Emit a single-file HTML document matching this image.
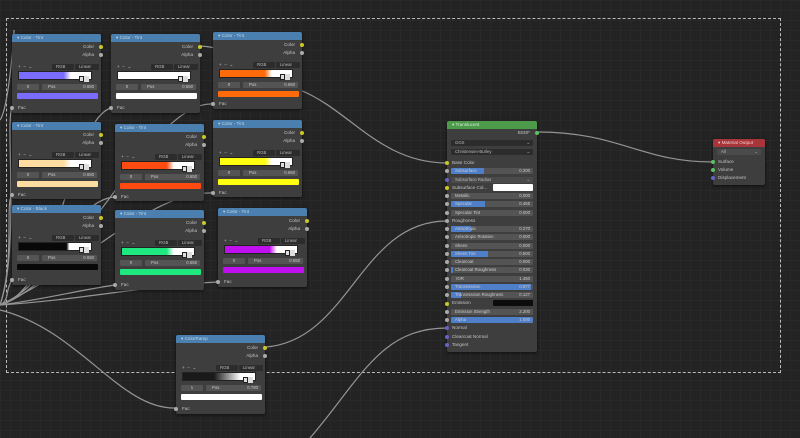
<!DOCTYPE html>
<html><head><meta charset="utf-8"><style>
*{margin:0;padding:0;box-sizing:border-box}
body{width:800px;height:438px;overflow:hidden;position:relative;font-family:"Liberation Sans",sans-serif;
background-color:#232323;
background-image:linear-gradient(#292929 1px,transparent 1px),linear-gradient(90deg,#292929 1px,transparent 1px);
background-size:10px 10px;}
.sel{position:absolute;left:6px;top:18px;width:775px;height:355px;border:1px dashed #bbb}
svg{position:absolute;left:0;top:0}
.n{position:absolute;width:89px;height:79px;background:#3e3e3e;border-radius:2px;box-shadow:0 1px 3px rgba(0,0,0,.6);font-size:4.6px;color:#c4c4c4}
.h{height:8px;background:#4a7faf;color:#c4d8e8;line-height:8px;padding-left:5px;border-radius:2px 2px 0 0;white-space:nowrap;overflow:hidden}
.a{position:absolute;white-space:nowrap;line-height:6px}
.so{position:absolute;width:4px;height:4px;border-radius:50%;background:#aaa}
.y{background:#c8c829}.p{background:#6363c7}
.dd{position:absolute;height:6px;background:#2c2c2c;border-radius:1px;line-height:6px;font-size:4.3px;color:#bbb;padding-left:4px}
.bx{position:absolute;height:6px;background:#545454;border-radius:1px;line-height:6px;font-size:4.3px;color:#ccc}
.bar{position:absolute;left:6px;top:37px;width:74px;height:9px;border:1px solid #222}
.bar:after{content:"";position:absolute;left:60px;top:4px;width:3px;height:4px;border:1px solid #222;background:#ddd;box-shadow:5px 0 0 #ddd}
.sw{position:absolute;left:5px;top:59px;width:81px;height:6px;border-radius:1px}
.f{position:absolute;left:4px;width:82px;height:6px;background:#545454;border-radius:1px;line-height:6px;font-size:4.3px;color:#ccc;overflow:hidden}
.f b{position:absolute;left:0;top:0;height:6px;background:#4f7fc9}
.f span{position:relative;padding-left:4px}
.f em{position:absolute;right:3px;font-style:normal}
</style></head><body>
<div class="sel"></div>
<svg width="800" height="438" fill="none" stroke="#959595" stroke-width="1.2">
<path d="M0 305 C 20 250, 5 120, 12 108"/>
<path d="M0 305 C 60 290, 70 120, 111 108"/>
<path d="M0 305 C 80 280, 150 100, 213 104"/>
<path d="M0 305 C 15 260, 5 200, 12 195"/>
<path d="M0 305 C 60 280, 70 200, 115 197"/>
<path d="M0 305 C 80 270, 150 190, 213 193"/>
<path d="M0 305 C 10 300, 5 290, 12 280"/>
<path d="M0 305 C 40 300, 80 290, 115 285"/>
<path d="M0 305 C 80 300, 150 285, 218 282"/>
<path d="M0 310 C 80 330, 120 410, 176 408"/>
<path d="M200 46 C 260 50, 280 90, 300 90 C 350 110, 380 163, 447 163"/>
<path d="M266 347 C 350 340, 360 221, 447 221"/>
<path d="M310 438 C 360 380, 380 328, 447 328"/>
<path d="M537 132 C 620 132, 640 162, 713 162"/>
<path d="M0 120 C 8 110, 14 40, 14 30"/>
</svg>

<div class="n" style="left:12px;top:34px"><div class="h">▾ Color - Tint</div>
<span class="a" style="right:7px;top:10px">Color</span><i class="so y" style="right:-2px;top:11px"></i>
<span class="a" style="right:7px;top:18px">Alpha</span><i class="so" style="right:-2px;top:19px"></i>
<span class="a" style="left:6px;top:30px">+&nbsp; −&nbsp; ⌄</span>
<div class="dd" style="left:40px;top:30px;width:22px">RGB</div><div class="dd" style="left:63px;top:30px;width:24px">Linear</div>
<div class="bar" style="background:linear-gradient(90deg,#7a6cff 0 62%,#fff 72%)"></div>
<div class="bx" style="left:5px;top:50px;width:22px;text-align:center">0</div><div class="bx" style="left:30px;top:50px;width:55px;padding-left:6px">Pos<span style="position:absolute;right:3px">0.650</span></div>
<div class="sw" style="background:#7a6cff"></div>
<span class="a" style="left:6px;top:71px">Fac</span><i class="so" style="left:-2px;top:72px"></i></div>

<div class="n" style="left:111px;top:34px"><div class="h">▾ Color - Tint</div>
<span class="a" style="right:7px;top:10px">Color</span><i class="so y" style="right:-2px;top:11px"></i>
<span class="a" style="right:7px;top:18px">Alpha</span><i class="so" style="right:-2px;top:19px"></i>
<span class="a" style="left:6px;top:30px">+&nbsp; −&nbsp; ⌄</span>
<div class="dd" style="left:40px;top:30px;width:22px">RGB</div><div class="dd" style="left:63px;top:30px;width:24px">Linear</div>
<div class="bar" style="background:#fff"></div>
<div class="bx" style="left:5px;top:50px;width:22px;text-align:center">0</div><div class="bx" style="left:30px;top:50px;width:55px;padding-left:6px">Pos<span style="position:absolute;right:3px">0.650</span></div>
<div class="sw" style="background:#fff"></div>
<span class="a" style="left:6px;top:71px">Fac</span><i class="so" style="left:-2px;top:72px"></i></div>

<div class="n" style="left:213px;top:32px;height:77px"><div class="h">▾ Color - Tint</div>
<span class="a" style="right:7px;top:10px">Color</span><i class="so y" style="right:-2px;top:11px"></i>
<span class="a" style="right:7px;top:18px">Alpha</span><i class="so" style="right:-2px;top:19px"></i>
<span class="a" style="left:6px;top:30px">+&nbsp; −&nbsp; ⌄</span>
<div class="dd" style="left:40px;top:30px;width:22px">RGB</div><div class="dd" style="left:63px;top:30px;width:24px">Linear</div>
<div class="bar" style="background:linear-gradient(90deg,#ff6a0a 0 62%,#fff 72%)"></div>
<div class="bx" style="left:5px;top:50px;width:22px;text-align:center">0</div><div class="bx" style="left:30px;top:50px;width:55px;padding-left:6px">Pos<span style="position:absolute;right:3px">0.650</span></div>
<div class="sw" style="background:#ff6a0a"></div>
<span class="a" style="left:6px;top:69px">Fac</span><i class="so" style="left:-2px;top:70px"></i></div>

<div class="n" style="left:12px;top:122px;height:77px"><div class="h">▾ Color - Tint</div>
<span class="a" style="right:7px;top:10px">Color</span><i class="so y" style="right:-2px;top:11px"></i>
<span class="a" style="right:7px;top:18px">Alpha</span><i class="so" style="right:-2px;top:19px"></i>
<span class="a" style="left:6px;top:30px">+&nbsp; −&nbsp; ⌄</span>
<div class="dd" style="left:40px;top:30px;width:22px">RGB</div><div class="dd" style="left:63px;top:30px;width:24px">Linear</div>
<div class="bar" style="background:linear-gradient(90deg,#ffdca0 0 62%,#fff 72%)"></div>
<div class="bx" style="left:5px;top:50px;width:22px;text-align:center">0</div><div class="bx" style="left:30px;top:50px;width:55px;padding-left:6px">Pos<span style="position:absolute;right:3px">0.650</span></div>
<div class="sw" style="background:#ffdca0"></div>
<span class="a" style="left:6px;top:70px">Fac</span><i class="so" style="left:-2px;top:71px"></i></div>

<div class="n" style="left:115px;top:124px;height:77px"><div class="h">▾ Color - Tint</div>
<span class="a" style="right:7px;top:10px">Color</span><i class="so y" style="right:-2px;top:11px"></i>
<span class="a" style="right:7px;top:18px">Alpha</span><i class="so" style="right:-2px;top:19px"></i>
<span class="a" style="left:6px;top:30px">+&nbsp; −&nbsp; ⌄</span>
<div class="dd" style="left:40px;top:30px;width:22px">RGB</div><div class="dd" style="left:63px;top:30px;width:24px">Linear</div>
<div class="bar" style="background:linear-gradient(90deg,#ff4a10 0 62%,#fff 72%)"></div>
<div class="bx" style="left:5px;top:50px;width:22px;text-align:center">0</div><div class="bx" style="left:30px;top:50px;width:55px;padding-left:6px">Pos<span style="position:absolute;right:3px">0.650</span></div>
<div class="sw" style="background:#ff4a10"></div>
<span class="a" style="left:6px;top:70px">Fac</span><i class="so" style="left:-2px;top:71px"></i></div>

<div class="n" style="left:213px;top:120px;height:77px"><div class="h">▾ Color - Tint</div>
<span class="a" style="right:7px;top:10px">Color</span><i class="so y" style="right:-2px;top:11px"></i>
<span class="a" style="right:7px;top:18px">Alpha</span><i class="so" style="right:-2px;top:19px"></i>
<span class="a" style="left:6px;top:30px">+&nbsp; −&nbsp; ⌄</span>
<div class="dd" style="left:40px;top:30px;width:22px">RGB</div><div class="dd" style="left:63px;top:30px;width:24px">Linear</div>
<div class="bar" style="background:linear-gradient(90deg,#ffff10 0 62%,#fff 72%)"></div>
<div class="bx" style="left:5px;top:50px;width:22px;text-align:center">0</div><div class="bx" style="left:30px;top:50px;width:55px;padding-left:6px">Pos<span style="position:absolute;right:3px">0.650</span></div>
<div class="sw" style="background:#ffff10"></div>
<span class="a" style="left:6px;top:70px">Fac</span><i class="so" style="left:-2px;top:71px"></i></div>

<div class="n" style="left:12px;top:205px;height:80px"><div class="h">▾ Color - Black</div>
<span class="a" style="right:7px;top:10px">Color</span><i class="so y" style="right:-2px;top:11px"></i>
<span class="a" style="right:7px;top:18px">Alpha</span><i class="so" style="right:-2px;top:19px"></i>
<span class="a" style="left:6px;top:30px">+&nbsp; −&nbsp; ⌄</span>
<div class="dd" style="left:40px;top:30px;width:22px">RGB</div><div class="dd" style="left:63px;top:30px;width:24px">Linear</div>
<div class="bar" style="background:linear-gradient(90deg,#080808 0 66%,#fff 70%)"></div>
<div class="bx" style="left:5px;top:50px;width:22px;text-align:center">0</div><div class="bx" style="left:30px;top:50px;width:55px;padding-left:6px">Pos<span style="position:absolute;right:3px">0.650</span></div>
<div class="sw" style="background:#080808"></div>
<span class="a" style="left:6px;top:72px">Fac</span><i class="so" style="left:-2px;top:73px"></i></div>

<div class="n" style="left:115px;top:210px;height:80px"><div class="h">▾ Color - Tint</div>
<span class="a" style="right:7px;top:10px">Color</span><i class="so y" style="right:-2px;top:11px"></i>
<span class="a" style="right:7px;top:18px">Alpha</span><i class="so" style="right:-2px;top:19px"></i>
<span class="a" style="left:6px;top:30px">+&nbsp; −&nbsp; ⌄</span>
<div class="dd" style="left:40px;top:30px;width:22px">RGB</div><div class="dd" style="left:63px;top:30px;width:24px">Linear</div>
<div class="bar" style="background:linear-gradient(90deg,#20e880 0 62%,#fff 72%)"></div>
<div class="bx" style="left:5px;top:50px;width:22px;text-align:center">0</div><div class="bx" style="left:30px;top:50px;width:55px;padding-left:6px">Pos<span style="position:absolute;right:3px">0.650</span></div>
<div class="sw" style="background:#20e880"></div>
<span class="a" style="left:6px;top:72px">Fac</span><i class="so" style="left:-2px;top:73px"></i></div>

<div class="n" style="left:218px;top:208px;height:79px"><div class="h">▾ Color - Tint</div>
<span class="a" style="right:7px;top:10px">Color</span><i class="so y" style="right:-2px;top:11px"></i>
<span class="a" style="right:7px;top:18px">Alpha</span><i class="so" style="right:-2px;top:19px"></i>
<span class="a" style="left:6px;top:30px">+&nbsp; −&nbsp; ⌄</span>
<div class="dd" style="left:40px;top:30px;width:22px">RGB</div><div class="dd" style="left:63px;top:30px;width:24px">Linear</div>
<div class="bar" style="background:linear-gradient(90deg,#c010f0 0 62%,#fff 72%)"></div>
<div class="bx" style="left:5px;top:50px;width:22px;text-align:center">0</div><div class="bx" style="left:30px;top:50px;width:55px;padding-left:6px">Pos<span style="position:absolute;right:3px">0.650</span></div>
<div class="sw" style="background:#c010f0"></div>
<span class="a" style="left:6px;top:71px">Fac</span><i class="so" style="left:-2px;top:72px"></i></div>

<div class="n" style="left:176px;top:335px;height:79px"><div class="h">▾ ColorRamp</div>
<span class="a" style="right:7px;top:10px">Color</span><i class="so y" style="right:-2px;top:11px"></i>
<span class="a" style="right:7px;top:18px">Alpha</span><i class="so" style="right:-2px;top:19px"></i>
<span class="a" style="left:6px;top:30px">+&nbsp; −&nbsp; ⌄</span>
<div class="dd" style="left:40px;top:30px;width:22px">RGB</div><div class="dd" style="left:63px;top:30px;width:24px">Linear</div>
<div class="bar" style="background:linear-gradient(90deg,#1a1a1a 0 43%,#fff 80%)"></div>
<div class="bx" style="left:5px;top:50px;width:22px;text-align:center">1</div><div class="bx" style="left:30px;top:50px;width:55px;padding-left:6px">Pos<span style="position:absolute;right:3px">0.780</span></div>
<div class="sw" style="background:#fff"></div>
<span class="a" style="left:6px;top:71px">Fac</span><i class="so" style="left:-2px;top:72px"></i></div>

<div class="n" style="left:447px;top:121px;width:90px;height:231px"><div class="h" style="background:#4d9a4a;color:#d4ecd4">▾ Translucent</div>
<span class="a" style="right:7px;top:9px">BSDF</span><i class="so" style="right:-2px;top:10px;background:#5fc05f"></i>
<div class="dd" style="left:4px;top:19px;width:82px">GGX<span style="position:absolute;right:3px">⌄</span></div>
<div class="dd" style="left:4px;top:28px;width:82px">Christensen-Burley<span style="position:absolute;right:3px">⌄</span></div>
<span class="a" style="left:5px;top:39px">Base Color</span><i class="so y" style="left:-2px;top:40px"></i>
<div class="f" style="top:47px"><b style="width:40%"></b><span>Subsurface</span><em>0.200</em></div><i class="so" style="left:-2px;top:48px"></i>
<div class="dd" style="left:4px;top:56px;width:82px;background:#4a4a4a">Subsurface Radius<span style="position:absolute;right:3px">⌄</span></div><i class="so p" style="left:-2px;top:57px"></i>
<span class="a" style="left:5px;top:64px">Subsurface Col...</span><div style="position:absolute;left:46px;top:63px;width:40px;height:7px;background:#fff;border-radius:1px"></div><i class="so y" style="left:-2px;top:65px"></i>
<div class="f" style="top:72px"><span>Metallic</span><em>0.000</em></div><i class="so" style="left:-2px;top:73px"></i>
<div class="f" style="top:80px"><b style="width:42%"></b><span>Specular</span><em>0.465</em></div><i class="so" style="left:-2px;top:81px"></i>
<div class="f" style="top:89px"><span>Specular Tint</span><em>0.000</em></div><i class="so" style="left:-2px;top:90px"></i>
<span class="a" style="left:5px;top:97px">Roughness</span><i class="so" style="left:-2px;top:98px"></i>
<div class="f" style="top:105px"><b style="width:24%"></b><span>Anisotropic</span><em>0.270</em></div><i class="so" style="left:-2px;top:106px"></i>
<div class="f" style="top:113px"><span>Anisotropic Rotation</span><em>0.000</em></div><i class="so" style="left:-2px;top:114px"></i>
<div class="f" style="top:122px"><span>Sheen</span><em>0.000</em></div><i class="so" style="left:-2px;top:123px"></i>
<div class="f" style="top:130px"><b style="width:45%"></b><span>Sheen Tint</span><em>0.500</em></div><i class="so" style="left:-2px;top:131px"></i>
<div class="f" style="top:138px"><span>Clearcoat</span><em>0.000</em></div><i class="so" style="left:-2px;top:139px"></i>
<div class="f" style="top:146px"><b style="width:3%"></b><span>Clearcoat Roughness</span><em>0.030</em></div><i class="so" style="left:-2px;top:147px"></i>
<div class="f" style="top:155px"><span>&nbsp;IOR</span><em>1.450</em></div><i class="so" style="left:-2px;top:156px"></i>
<div class="f" style="top:163px"><b style="width:97%"></b><span>Transmission</span><em>0.977</em></div><i class="so" style="left:-2px;top:164px"></i>
<div class="f" style="top:171px"><b style="width:12%"></b><span>Transmission Roughness</span><em>0.127</em></div><i class="so" style="left:-2px;top:172px"></i>
<span class="a" style="left:5px;top:179px">Emission</span><div style="position:absolute;left:46px;top:179px;width:40px;height:6px;background:#0c0c0c;border-radius:1px"></div><i class="so y" style="left:-2px;top:181px"></i>
<div class="f" style="top:188px"><span>Emission Strength</span><em>2.200</em></div><i class="so" style="left:-2px;top:189px"></i>
<div class="f" style="top:196px"><b style="width:100%"></b><span>Alpha</span><em>1.000</em></div><i class="so" style="left:-2px;top:197px"></i>
<span class="a" style="left:5px;top:204px">Normal</span><i class="so p" style="left:-2px;top:205px"></i>
<span class="a" style="left:5px;top:213px">Clearcoat Normal</span><i class="so p" style="left:-2px;top:214px"></i>
<span class="a" style="left:5px;top:221px">Tangent</span><i class="so p" style="left:-2px;top:222px"></i>
</div>

<div class="n" style="left:713px;top:139px;width:52px;height:46px"><div class="h" style="background:#a8353a;color:#f0d0d0">▾ Material Output</div>
<div class="dd" style="left:4px;top:10px;width:44px;background:#4a4a4a">All<span style="position:absolute;right:3px">⌄</span></div>
<span class="a" style="left:5px;top:20px">Surface</span><i class="so" style="left:-2px;top:21px;background:#5fc05f"></i>
<span class="a" style="left:5px;top:28px">Volume</span><i class="so" style="left:-2px;top:29px;background:#5fc05f"></i>
<span class="a" style="left:5px;top:36px">Displacement</span><i class="so p" style="left:-2px;top:37px"></i>
</div>
</body></html>
